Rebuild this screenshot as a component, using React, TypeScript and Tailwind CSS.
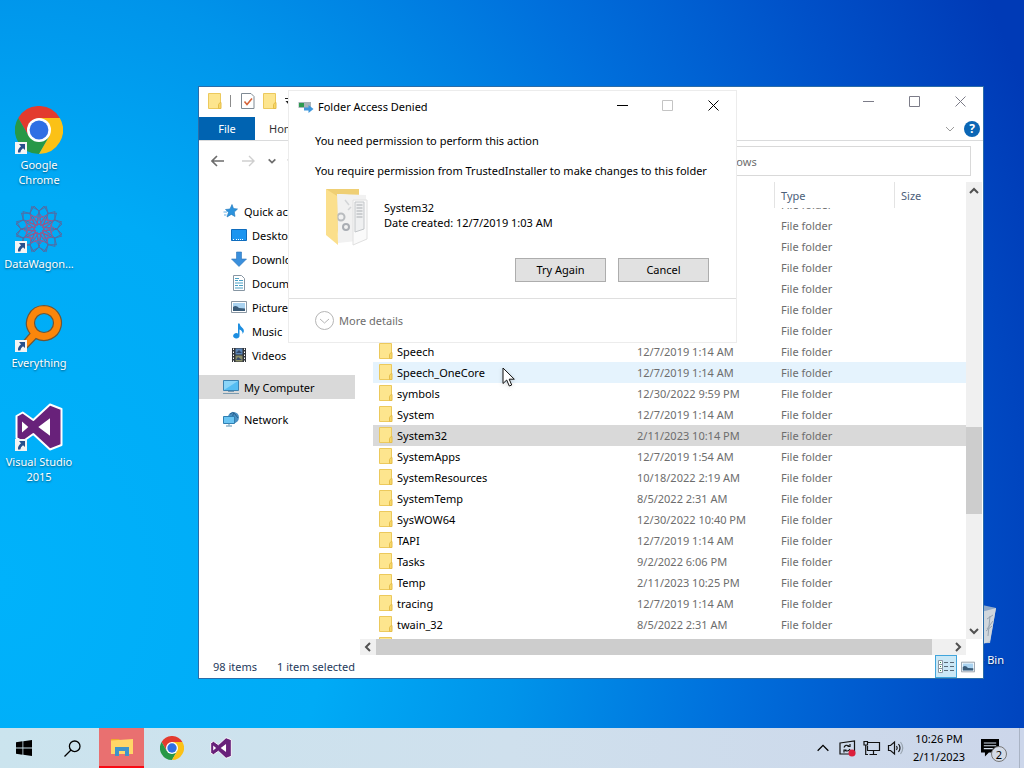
import { useLayoutEffect, useRef, useState } from "react"
import type { ReactNode } from "react"

interface FileRow {
  name: string
  date: string
}

const FILES: FileRow[] = [
  { name: "servicing", date: "12/7/2019 1:14 AM" },
  { name: "Setup", date: "12/7/2019 1:54 AM" },
  { name: "ShellComponents", date: "12/7/2019 1:54 AM" },
  { name: "ShellExperiences", date: "12/7/2019 1:54 AM" },
  { name: "SKB", date: "12/7/2019 1:14 AM" },
  { name: "SoftwareDistribution", date: "8/5/2022 2:31 AM" },
  { name: "Speech Data", date: "12/7/2019 1:14 AM" },
  { name: "Speech", date: "12/7/2019 1:14 AM" },
  { name: "Speech_OneCore", date: "12/7/2019 1:14 AM" },
  { name: "symbols", date: "12/30/2022 9:59 PM" },
  { name: "System", date: "12/7/2019 1:14 AM" },
  { name: "System32", date: "2/11/2023 10:14 PM" },
  { name: "SystemApps", date: "12/7/2019 1:54 AM" },
  { name: "SystemResources", date: "10/18/2022 2:19 AM" },
  { name: "SystemTemp", date: "8/5/2022 2:31 AM" },
  { name: "SysWOW64", date: "12/30/2022 10:40 PM" },
  { name: "TAPI", date: "12/7/2019 1:14 AM" },
  { name: "Tasks", date: "9/2/2022 6:06 PM" },
  { name: "Temp", date: "2/11/2023 10:25 PM" },
  { name: "tracing", date: "12/7/2019 1:14 AM" },
  { name: "twain_32", date: "8/5/2022 2:31 AM" },
  { name: "Vss", date: "12/7/2019 1:14 AM" },
]

const HOVERED = "Speech_OneCore"

/* ---------- icons ---------- */

function ChromeIcon({ className }: { className: string }) {
  return (
    <svg viewBox="0 0 48 48" className={className} aria-hidden="true">
      <path d="M3.2 12A24 24 0 0 1 44.8 12H24L13.6 30Z" fill="#e33b2e" />
      <path d="M3.2 12L13.6 30H34.4L24 48A24 24 0 0 1 3.2 12Z" fill="#279847" />
      <path d="M44.8 12A24 24 0 0 1 24 48L34.4 30L24 12Z" fill="#fbc116" />
      <circle cx="24" cy="24" r="12" fill="#fff" />
      <circle cx="24" cy="24" r="9.4" fill="#2f6fe4" />
    </svg>
  )
}

function VisualStudioIcon({ className }: { className: string }) {
  return (
    <svg viewBox="0 0 48 48" className={className} aria-hidden="true">
      <path
        d="M1.5 13L7.7 9.5L18.3 17L35 1.5L46.5 6V42L35 46.5L18.3 31L7.7 38.5L1.5 35Z"
        fill="#68217a"
        stroke="#fff"
        strokeWidth="2"
        strokeLinejoin="round"
      />
      <path d="M7 18.5V29.5L13.3 24ZM23.3 24L35 15.3V32.7Z" fill="#fff" />
    </svg>
  )
}

function DataWagonIcon() {
  return (
    <svg viewBox="0 0 48 48" className="size-12" fill="none" aria-hidden="true">
      {[0, 30, 60, 90, 120, 150, 180, 210, 240, 270, 300, 330].map((a) => (
        <g key={a} transform={`rotate(${a} 24 24)`}>
          <path d="M24 6L29 1L33 8L24 20L15 8L19 1Z" stroke="#4f6ea6" />
          <path d="M24 8L29 14L24 20L19 14Z" stroke="#a2568a" />
        </g>
      ))}
    </svg>
  )
}

function EverythingIcon() {
  return (
    <svg viewBox="0 0 48 48" className="size-12" aria-hidden="true">
      <path
        fillRule="evenodd"
        d="M29 1.5A17.5 17.5 0 1 1 21 34.6L11 45L6 40L15 29.5A17.5 17.5 0 0 1 29 1.5ZM29 9.5A9.5 9.5 0 1 0 29 28.5A9.5 9.5 0 1 0 29 9.5Z"
        fill="#fb860b"
        stroke="#6d5537"
        strokeWidth="1.2"
      />
    </svg>
  )
}

function RecycleBinIcon() {
  return (
    <svg viewBox="0 0 48 48" className="size-12" aria-hidden="true">
      <path d="M4 5L45 7L39 42L10 43Z" fill="#b9c4cf" />
      <path d="M30 11L45 7L39 40L32 43Z" fill="#d0d7dd" />
      <path d="M4 5L22 2L45 7L30 11Z" fill="#8fa9c9" />
      <path d="M36 18l6-4M35 30l6-5M39 15l-2 20M42 20l-6 8" stroke="#98a5b2" />
    </svg>
  )
}

function ShortcutArrow() {
  return (
    <svg viewBox="0 0 12 12" className="absolute bottom-0 left-0 size-3" aria-hidden="true">
      <path d="M0 0H12V12H0Z" fill="#f4f4f4" />
      <path d="M4 2H10V8L8 6.3Q5.5 8 5.3 10.5H3Q2.5 7 6 4.2Z" fill="#274f8c" />
    </svg>
  )
}

function FolderIcon({ className = "h-4 w-3.5" }: { className?: string }) {
  return (
    <svg viewBox="0 0 14 16" className={className} aria-hidden="true">
      <path d="M0.5 0.5H12.5V15.5H0.5Z" fill="#fde58e" stroke="#ecc95c" />
      <path d="M10.5 15.5V11.5L12 9.5H13V15.5Z" fill="#f8d866" stroke="#e5bd4a" />
    </svg>
  )
}

function SystemFolderIcon() {
  return (
    <svg viewBox="0 0 44 58" className="h-[58px] w-11" aria-hidden="true">
      <path d="M1 1H34V8L14 6V50Z" fill="#efcf74" />
      <path d="M12 6L41 7V52L13 55Z" fill="#f1f1f1" />
      <path d="M28 12H42V51L28 57Z" fill="#fafafa" stroke="#e0e0e0" />
      <path d="M30 14h9v27l-9 3z" fill="#eff0f1" stroke="#c3c6c9" />
      <path d="M31.5 17h6M31.5 20h6M31.5 23h6M31.5 26h6M31.5 29h6" stroke="#a9adb1" />
      <circle cx="16" cy="29" r="3.5" fill="none" stroke="#b9bcbf" strokeWidth="2" />
      <circle cx="21" cy="39" r="3" fill="none" stroke="#a9adb3" strokeWidth="2" />
      <path d="M20 12l4 5M23 22l3-3" stroke="#d3d5d7" strokeWidth="1.5" />
      <path d="M1 1L12 8L13 57L1 47Z" fill="#fbdf8c" />
    </svg>
  )
}

function StarIcon() {
  return (
    <svg viewBox="0 0 16 16" className="size-4" aria-hidden="true">
      <path d="M9 1.5L10.5 5.5L14.5 6L11.3 9L12 13.5L8.3 11.4L4 14L5.5 9.3L2.5 6.5L7 6Z" fill="#2b93dd" stroke="#1c74b8" strokeWidth="0.6" />
      <path d="M0.5 9H4M1 12h2.5" stroke="#64b0e6" />
    </svg>
  )
}

function DesktopIcon() {
  return (
    <svg viewBox="0 0 16 16" className="size-4" aria-hidden="true">
      <path d="M0.5 2.5H15.5V13.5H0.5Z" fill="#1c95f0" stroke="#0f6cbd" />
      <path d="M2 12.5h2M5 12.5h8" stroke="#fff" strokeDasharray="1 1" />
    </svg>
  )
}

function DownloadsIcon() {
  return (
    <svg viewBox="0 0 16 16" className="size-4" aria-hidden="true">
      <path d="M5.5 1H10.5V8H15.5L8 15.5L0.5 8H5.5Z" fill="#3a8fdc" stroke="#2c74b8" strokeWidth="0.6" />
    </svg>
  )
}

function DocumentsIcon() {
  return (
    <svg viewBox="0 0 16 16" className="size-4" fill="none" aria-hidden="true">
      <path d="M2.5 0.5H10.5L13.5 3.5V15.5H2.5Z" fill="#fff" stroke="#8796a3" />
      <path d="M4 5.5h3M8 5.5h4M4 8h8M4 10.5h3M8 10.5h4M4 13h8M4 3.5h4" stroke="#4aa0c4" />
    </svg>
  )
}

function PicturesIcon({ className = "size-4" }: { className?: string }) {
  return (
    <svg viewBox="0 0 16 16" className={className} aria-hidden="true">
      <path d="M0.5 2.5H15.5V13.5H0.5Z" fill="#fff" stroke="#8a97a3" />
      <path d="M2 4H14V12H2Z" fill="#a9d2f0" />
      <path d="M2 8Q5 5.5 8 9L14 9.5V12H2Z" fill="#3a5b78" />
    </svg>
  )
}

function MusicIcon() {
  return (
    <svg viewBox="0 0 16 16" className="size-4" aria-hidden="true">
      <path d="M7 0.5H8.5Q9 3.5 12 5.5Q14 8 11.5 11Q12 8 8.5 6.5V12.5A3.2 2.7 0 1 1 7 10.5Z" fill="#1d8ee0" />
    </svg>
  )
}

function VideosIcon() {
  return (
    <svg viewBox="0 0 16 16" className="size-4" aria-hidden="true">
      <path d="M1 1H15V15H1Z" fill="#30343a" />
      <path d="M4.5 1.5H11.5V7.5H4.5Z" fill="#5c87b8" />
      <path d="M4.5 8.5H11.5V14.5H4.5Z" fill="#8a8f6a" />
      <path d="M5 6l3-3 3 3zM5 13l2-3 4 3z" fill="#34486a" />
      <path d="M2.5 1.5V15M13.5 1.5V15" stroke="#fff" strokeDasharray="1.5 1.5" />
    </svg>
  )
}

function ComputerIcon() {
  return (
    <svg viewBox="0 0 18 16" className="h-4 w-[18px]" aria-hidden="true">
      <path d="M1.5 1.5H16.5V11.5H1.5Z" fill="#55bdf2" stroke="#3d83b1" />
      <path d="M2 2H16L2 11Z" fill="#8bd5f8" />
      <path d="M1 14.5H17M6 12.5h6" stroke="#7b9bb0" />
    </svg>
  )
}

function NetworkIcon() {
  return (
    <svg viewBox="0 0 18 16" className="h-4 w-[18px]" aria-hidden="true">
      <circle cx="11.5" cy="6.5" r="5.5" fill="#4a8fc1" />
      <path d="M8 3q3-3 5 0t3 4M12 1.5q-3 5 1 10" fill="none" stroke="#27608f" />
      <path d="M1.5 5.5H12.5V12.5H1.5Z" fill="#6bc5f3" stroke="#2f7fb2" />
      <path d="M4 15h6M7 12.5v2" stroke="#5b8fae" />
    </svg>
  )
}

function Chevron({ dir, className }: { dir: "up" | "down" | "left" | "right"; className: string }) {
  const d = {
    up: "M2 8L6 4L10 8",
    down: "M2 4L6 8L10 4",
    left: "M8 2L4 6L8 10",
    right: "M4 2L8 6L4 10",
  }[dir]
  return (
    <svg viewBox="0 0 12 12" className={className} fill="none" stroke="currentColor" aria-hidden="true">
      <path d={d} />
    </svg>
  )
}

function CaptionIcon({ kind }: { kind: "min" | "max" | "close" }) {
  const d = {
    min: "M0 5.5H11",
    max: "M0.5 0.5H10.5V10.5H0.5Z",
    close: "M0.5 0.5L10.5 10.5M10.5 0.5L0.5 10.5",
  }[kind]
  return (
    <svg viewBox="0 0 11 11" className="size-[11px]" fill="none" stroke="currentColor" aria-hidden="true">
      <path d={d} />
    </svg>
  )
}

/* ---------- desktop ---------- */

function Shortcut({ icon, label, arrow = true }: { icon: ReactNode; label: string; arrow?: boolean }) {
  return (
    <button type="button" className="flex h-[99px] w-[78px] flex-col items-center text-white">
      <span className="relative size-12">
        {icon}
        {arrow && <ShortcutArrow />}
      </span>
      <span className="mt-[3px] text-center leading-[15px] [text-shadow:0_1px_2px_rgba(0,0,0,0.5)]">{label}</span>
    </button>
  )
}

/* ---------- explorer window ---------- */

function NavItem({ icon, label, nested, selected }: { icon: ReactNode; label: string; nested?: boolean; selected?: boolean }) {
  return (
    <a
      href="#"
      className={`flex h-6 items-center whitespace-nowrap ${nested ? "gap-[5px] pl-8" : "gap-1 pl-[23px]"} ${selected ? "bg-[#d9d9d9]" : ""}`}
    >
      <span className={`flex justify-center ${nested ? "w-4" : "w-[18px]"}`}>{icon}</span>
      {label}
    </a>
  )
}

function FileList() {
  const listRef = useRef<HTMLDivElement>(null)
  const [selected, setSelected] = useState("System32")

  useLayoutEffect(() => {
    if (listRef.current) listRef.current.scrollTop = 14
  }, [])

  return (
    <div ref={listRef} className="min-w-0 flex-1 overflow-hidden pl-[13px]">
      <table className="w-full table-fixed border-separate border-spacing-0 text-left">
        <colgroup>
          <col className="w-[258px]" />
          <col className="w-36" />
          <col className="w-[120px]" />
          <col />
        </colgroup>
        <thead className="sticky top-0 z-10 bg-white text-[#4c607a]">
          <tr className="h-[26px]">
            <th className="border-r border-[#e3e3e3] pl-6 font-normal">Name</th>
            <th className="border-r border-[#e3e3e3] pl-1.5 font-normal">Date modified</th>
            <th className="border-r border-[#e3e3e3] pl-1.5 font-normal">Type</th>
            <th className="pl-1.5 font-normal">Size</th>
          </tr>
        </thead>
        <tbody>
          {FILES.map((f) => (
            <tr
              key={f.name}
              onClick={() => setSelected(f.name)}
              className={`h-[21px] whitespace-nowrap text-[#6d6d6d] ${
                f.name === selected ? "bg-[#d9d9d9]" : f.name === HOVERED ? "bg-[#e5f3fd]" : "hover:bg-[#e5f3fd]"
              }`}
            >
              <td className="p-0 text-black">
                <span className="flex items-start gap-1 pl-1.5">
                  <FolderIcon />
                  {f.name}
                </span>
              </td>
              <td className="p-0 pl-1.5">{f.date}</td>
              <td className="p-0 pl-1.5">File folder</td>
              <td className="p-0" />
            </tr>
          ))}
        </tbody>
      </table>
    </div>
  )
}

function ExplorerWindow() {
  return (
    <section
      aria-label="Windows"
      className="absolute top-[86px] right-10 bottom-[49px] left-[198px] isolate flex flex-col border border-[#2a6ca8] bg-white text-black"
    >
      <header className="flex h-[30px] items-start">
        <div className="flex h-7 flex-1 items-center pl-[9px]">
          <FolderIcon />
          <span className="ml-2 h-3 w-px bg-[#8b8b8b]" />
          <button type="button" aria-label="Properties" className="ml-2.5">
            <svg viewBox="0 0 14 16" className="h-4 w-3.5" fill="none">
              <path d="M0.5 0.5H10L13 3.5V15.5H0.5Z" fill="#fff" stroke="#7f8a94" />
              <path d="M3.5 8.5L6 11.5L11 5.5" stroke="#d5643a" strokeWidth="1.6" />
            </svg>
          </button>
          <button type="button" aria-label="New folder" className="ml-2">
            <FolderIcon />
          </button>
          <button type="button" aria-label="Customize toolbar" className="ml-2">
            <svg viewBox="0 0 7 7" className="size-[7px]">
              <path d="M0 0H7V1H0ZM0.5 3H6.5L3.5 6.5Z" fill="#222" />
            </svg>
          </button>
        </div>
        <div className="flex text-[#7c7c88]">
          <button type="button" aria-label="Minimize" className="flex h-7 w-[45px] items-center justify-center"><CaptionIcon kind="min" /></button>
          <button type="button" aria-label="Maximize" className="flex h-7 w-[46px] items-center justify-center"><CaptionIcon kind="max" /></button>
          <button type="button" aria-label="Close" className="flex h-7 w-[46px] items-center justify-center"><CaptionIcon kind="close" /></button>
        </div>
      </header>

      {/* Ribbon tabs */}
      <nav className="flex h-6 items-stretch border-b border-[#dadbdc]">
        <button type="button" className="w-14 bg-[#0063b1] text-white">File</button>
        <button type="button" className="px-3.5 text-[#333]">Home</button>
        <button type="button" aria-label="Expand ribbon" className="ml-auto text-[#9a9a9a]"><Chevron dir="down" className="size-3" /></button>
        <button type="button" aria-label="Help" className="mr-[3px] ml-2 flex size-4 items-center justify-center self-center rounded-full bg-[#0b66b5] text-[12px] font-bold text-white">?</button>
      </nav>

      {/* Address row */}
      <div className="flex h-10 items-center pr-3 text-[#6d6d6d]">
        <button type="button" aria-label="Back" className="ml-3">
          <svg viewBox="0 0 14 12" className="h-3 w-3.5" fill="none" stroke="#6c6c6c" strokeWidth="1.6"><path d="M13 6H1.5M6 1L1 6L6 11" /></svg>
        </button>
        <button type="button" aria-label="Forward" className="ml-4">
          <svg viewBox="0 0 14 12" className="h-3 w-3.5" fill="none" stroke="#cfcfcf" strokeWidth="1.4"><path d="M1 6H12.5M8 1L13 6L8 11" /></svg>
        </button>
        <button type="button" aria-label="Recent locations" className="ml-3"><Chevron dir="down" className="size-2.5 stroke-2" /></button>
        <button type="button" aria-label="Up" className="ml-2.5">
          <svg viewBox="0 0 12 14" className="h-3.5 w-3" fill="none" stroke="#6c6c6c" strokeWidth="1.6"><path d="M6 13V1.5M1 6.5L6 1L11 6.5" /></svg>
        </button>
        <input aria-label="Address" defaultValue="C:\Windows" className="ml-3 h-[30px] w-80 border border-[#d9d9d9] px-2" />
        <input aria-label="Search" placeholder="Search Windows" className="ml-3 h-[30px] min-w-0 flex-1 border border-[#d9d9d9] px-7 placeholder:text-[#6d6d6d]" />
      </div>

      <div className="flex min-h-0 flex-1 pr-px">
        <nav className="w-[161px] pt-[18px] pr-[5px]">
          <NavItem icon={<StarIcon />} label="Quick access" />
          <NavItem nested icon={<DesktopIcon />} label="Desktop" />
          <NavItem nested icon={<DownloadsIcon />} label="Downloads" />
          <NavItem nested icon={<DocumentsIcon />} label="Documents" />
          <NavItem nested icon={<PicturesIcon />} label="Pictures" />
          <NavItem nested icon={<MusicIcon />} label="Music" />
          <NavItem nested icon={<VideosIcon />} label="Videos" />
          <div className="my-2"><NavItem selected icon={<ComputerIcon />} label="My Computer" /></div>
          <NavItem icon={<NetworkIcon />} label="Network" />
        </nav>
        <div className="flex min-w-0 flex-1 flex-col">
          <div className="flex min-h-0 flex-1 pt-px">
            <FileList />
            <div className="flex w-4 flex-col items-center bg-[#f0f0f0] text-[#505050]">
              <button type="button" aria-label="Scroll up" className="flex h-[17px] items-center"><Chevron dir="up" className="size-3 stroke-2" /></button>
              <div className="flex flex-1 flex-col self-stretch">
                <div className="grow-[226]" />
                <div className="h-[87px] bg-[#cdcdcd]" />
                <div className="grow-[107]" />
              </div>
              <button type="button" aria-label="Scroll down" className="flex h-[17px] items-center"><Chevron dir="down" className="size-3 stroke-2" /></button>
            </div>
          </div>
          <div className="mr-4 flex h-4 bg-[#f0f0f0] text-[#505050]">
            <button type="button" aria-label="Scroll left" className="flex w-4 items-center justify-center"><Chevron dir="left" className="size-3 stroke-2" /></button>
            <div className="mr-[17px] flex-1 bg-[#cdcdcd]" />
            <button type="button" aria-label="Scroll right" className="flex w-[17px] items-center justify-center"><Chevron dir="right" className="size-3 stroke-2" /></button>
          </div>
        </div>
      </div>

      <footer className="flex h-[23px] items-center gap-5 pr-2 pl-3.5 text-[#1e395b]">
        <span>98 items</span>
        <span>1 item selected</span>
        <div className="ml-auto flex items-center gap-1">
          <button type="button" aria-label="Details view" className="flex h-[23px] w-[22px] items-center justify-center border border-[#41a5dc] bg-[#cbe8f6]">
            <svg viewBox="0 0 17 14" className="h-3.5 w-[17px]" fill="none">
              <path d="M0.5 0.5h4v4h-4zM0.5 4.5h4v4h-4zM0.5 8.5h4v4h-4z" fill="#fff" stroke="#8b98a3" />
              <path d="M2 2.5h1M2 6.5h1M2 10.5h1" stroke="#2a8a4a" />
              <path d="M6 2.5h4M12 2.5h4M6 6.5h4M12 6.5h4M6 10.5h4M12 10.5h4" stroke="#5a6a78" />
            </svg>
          </button>
          <button type="button" aria-label="Thumbnail view"><PicturesIcon className="size-3.5" /></button>
        </div>
      </footer>
    </section>
  )
}

/* ---------- permission dialog ---------- */

function AccessDeniedDialog() {
  return (
    <div
      role="dialog"
      aria-labelledby="denied-title"
      className="absolute top-[90px] left-[288px] w-[449px] border border-[#ececec] bg-white text-black"
    >
      <header className="flex h-[30px] items-start">
        <div className="flex h-[30px] flex-1 items-center gap-1 pl-[9px]">
          <svg viewBox="0 0 16 16" className="size-4" aria-hidden="true">
            <path d="M0.5 4H13V10H0.5Z" fill="#a9b4ba" />
            <path d="M1 5H6V9H1Z" fill="#2d9a50" />
            <path d="M6 9.5H10.5V7L15.5 11L10.5 15V12.5H6Z" fill="#3f97dc" />
          </svg>
          <h1 id="denied-title">Folder Access Denied</h1>
        </div>
        <button type="button" aria-label="Minimize" className="flex h-7 w-[46px] items-center justify-center"><CaptionIcon kind="min" /></button>
        <button type="button" aria-label="Maximize" disabled className="flex h-7 w-[45px] items-center justify-center text-[#c4c4c4]"><CaptionIcon kind="max" /></button>
        <button type="button" aria-label="Close" className="flex h-7 w-[46px] items-center justify-center"><CaptionIcon kind="close" /></button>
      </header>

      <div className="border-b border-[#dfdfdf] pt-3 pr-[27px] pb-4 pl-[26px] leading-[15px] whitespace-nowrap">
        <p>You need permission to perform this action</p>
        <p className="mt-[15px]">You require permission from TrustedInstaller to make changes to this folder</p>
        <div className="mt-2.5 flex items-start pl-2.5">
          <SystemFolderIcon />
          <div className="mt-3 ml-[15px]">
            <p>System32</p>
            <p>Date created: 12/7/2019 1:03 AM</p>
          </div>
        </div>
        <div className="mt-3 flex justify-end gap-3">
          <button type="button" className="h-6 w-[91px] border border-[#adadad] bg-[#e1e1e1] pb-px">Try Again</button>
          <button type="button" className="h-6 w-[91px] border border-[#adadad] bg-[#e1e1e1] pb-px">Cancel</button>
        </div>
      </div>

      <button type="button" className="flex h-[43px] items-center gap-[5px] pl-[26px] text-[#6d6d6d]">
        <svg viewBox="0 0 19 19" className="size-[19px]" fill="none" stroke="#b5b5b5" aria-hidden="true">
          <circle cx="9.5" cy="9.5" r="9" />
          <path d="M5 8L9.5 12L14 8" />
        </svg>
        More details
      </button>
    </div>
  )
}

/* ---------- taskbar ---------- */

function Taskbar() {
  return (
    <footer className="flex h-10 items-center bg-linear-to-r from-[#cbe4ee] via-[#cfe0ed] to-[#ccd6ea] text-black">
      <button type="button" aria-label="Start" className="flex h-10 w-12 items-center justify-center">
        <svg viewBox="0 0 16 16" className="size-4">
          <path d="M0 2.2L6.5 1.3V7.6H0ZM7.3 1.2L16 0V7.6H7.3ZM0 8.4H6.5V14.7L0 13.8ZM7.3 8.4H16V16L7.3 14.8Z" />
        </svg>
      </button>
      <button type="button" aria-label="Search" className="flex h-10 w-12 items-center justify-center">
        <svg viewBox="0 0 17 17" className="size-[17px]" fill="none" stroke="#000" strokeWidth="1.3">
          <circle cx="10.7" cy="6.3" r="5.3" />
          <path d="M7 10L0.5 16.5" />
        </svg>
      </button>
      <button type="button" aria-label="File Explorer" className="ml-[3px] flex h-10 w-[45px] items-center justify-center border-b-2 border-[#f80a14] bg-[#e97070]">
        <svg viewBox="0 0 22 20" className="h-5 w-[22px]">
          <path d="M0 2H8L9.5 4H0Z" fill="#f0a92c" />
          <path d="M0 3.5L22 2V17H0Z" fill="#ffd667" />
          <path d="M4 10H18V19H14V14H8V19H4Z" fill="#3f93c9" />
        </svg>
      </button>
      <button type="button" aria-label="Google Chrome" className="flex h-10 w-14 items-center justify-center">
        <ChromeIcon className="size-6" />
      </button>
      <button type="button" aria-label="Visual Studio" className="flex h-10 w-[42px] items-center justify-center">
        <VisualStudioIcon className="size-[22px]" />
      </button>

      <div className="ml-auto flex items-center">
        <button type="button" aria-label="Show hidden icons"><Chevron dir="up" className="size-4" /></button>
        <svg viewBox="0 0 18 18" className="ml-2 size-[18px]" fill="none" stroke="#111" strokeWidth="1.2" aria-label="Update status" role="img">
          <path d="M1 4L15.5 2V15H1Z" />
          <path d="M5 8.5Q6.5 5 10 7M11 5v2.5H8.5M11 10Q9.5 13 6 11.5M5 13.5V11h2.5" />
          <circle cx="13" cy="14" r="3.5" fill="#dc1f3c" stroke="none" />
        </svg>
        <svg viewBox="0 0 18 16" className="ml-1.5 h-4 w-[18px]" fill="none" stroke="#111" strokeWidth="1.2" aria-label="Network" role="img">
          <path d="M5 2.5H16.5V10.5H4.5V6M10.5 10.5V14M6.5 14.5H14" />
          <path d="M1 1.5H4.5V5H1ZM2.7 5V14.5H5" />
        </svg>
        <svg viewBox="0 0 18 16" className="ml-1.5 h-4 w-[18px]" fill="none" stroke="#111" strokeWidth="1.2" aria-label="Volume" role="img">
          <path d="M1.5 5.5H3.5L7.5 2V14L3.5 10.5H1.5Z" />
          <path d="M9.5 6Q11 8 9.5 10M11.5 4Q14.5 8 11.5 12" />
          <path d="M13.5 2Q18 8 13.5 14" stroke="#9aa5b0" />
        </svg>
        <div className="w-[68px] text-center leading-[18px]">
          <p>10:26 PM</p>
          <p>2/11/2023</p>
        </div>
        <button type="button" aria-label="Notifications" className="relative ml-2 h-7 w-8">
          <svg viewBox="0 0 16 16" className="size-[18px]">
            <path d="M0 0H16V12H7L3.5 15.5V12H0Z" />
            <path d="M2.5 3.5h11M2.5 6h11M2.5 8.5h8" stroke="#d4deeb" />
          </svg>
          <span className="absolute right-1.5 bottom-0 flex size-4 items-center justify-center rounded-full border border-[#777] bg-[#d3dae6]">2</span>
        </button>
        <span className="ml-1.5 h-10 w-[5px] border-l border-[#a9b3c4]" />
      </div>
    </footer>
  )
}

export default function App() {
  return (
    <div className="flex h-screen flex-col overflow-hidden bg-[#003ab4] font-['Noto_Sans','Open_Sans',sans-serif] text-[11px] leading-[17px]">
      <main className="relative flex-1 bg-[radial-gradient(ellipse_115%_190%_at_0%_80%,#00b2fb_0%,#00abf6_28%,#0094ea_44%,#0070dc_62%,#0050c8_80%,#003ab6_94%)]">
        <div className="flex w-[78px] flex-col pt-[106px]">
          <Shortcut icon={<ChromeIcon className="size-12" />} label="Google Chrome" />
          <Shortcut icon={<DataWagonIcon />} label="DataWagon..." />
          <Shortcut icon={<EverythingIcon />} label="Everything" />
          <Shortcut icon={<VisualStudioIcon className="size-12" />} label="Visual Studio 2015" />
        </div>
        <div className="absolute right-2.5 bottom-7">
          <Shortcut arrow={false} icon={<RecycleBinIcon />} label="Recycle Bin" />
        </div>

        <ExplorerWindow />
        <AccessDeniedDialog />

        {/* Mouse pointer */}
        <svg viewBox="0 0 14 20" className="pointer-events-none absolute top-[367px] left-[502px] h-5 w-3.5 drop-shadow-sm" aria-hidden="true">
          <path d="M1 1V16.5L4.7 13L7.3 19L9.7 18L7.2 12.2H12.3Z" fill="#fff" stroke="#111" />
        </svg>
      </main>
      <Taskbar />
    </div>
  )
}
